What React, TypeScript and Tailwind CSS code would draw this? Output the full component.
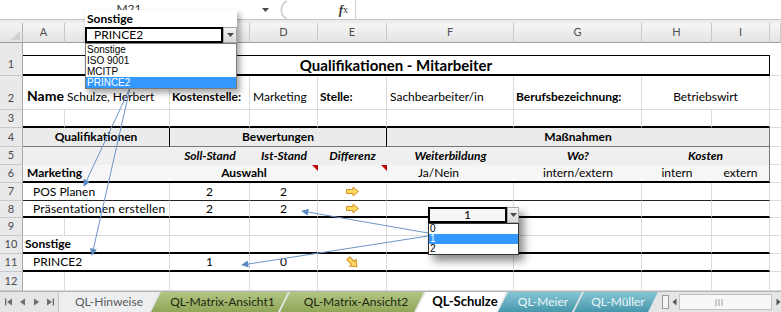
import React from "react";

const GR = "border-r border-r-[#dadada]";
const GB = "border-b border-b-[#dadada]";
const TB = "border-b-2 border-b-black";
const KB = "border-b border-b-[#222222]";
const T = "flex overflow-hidden whitespace-nowrap text-[12px] text-black";

function RH({ n, tall }: { n: number; tall?: boolean }) {
  return (
    <div
      className={`bg-[#e8e9eb] border-r border-r-[#a9a9a9] border-b border-b-[#c9c9c9] flex justify-center text-[11px] text-[#4a4a4a] ${
        tall ? "items-end pb-[3px]" : "items-center"
      }`}
    >
      {n}
    </div>
  );
}

const RightArrow = () => (
  <svg width="15" height="11" viewBox="0 0 15 11">
    <path d="M1.5 3.5H8V1L13.5 5.5L8 10V7.5H1.5Z" fill="#ffd966" stroke="#d58f1e" strokeWidth="1" />
  </svg>
);

const DiagArrow = () => (
  <svg width="15" height="15" viewBox="0 0 15 15">
    <g transform="rotate(45 7.5 7.5)">
      <path d="M1.5 5.5H8V3L13.5 7.5L8 12V9.5H1.5Z" fill="#ffd966" stroke="#d58f1e" strokeWidth="1" />
    </g>
  </svg>
);

const Chev = () => (
  <svg width="7" height="4" viewBox="0 0 7 4">
    <path d="M0 0H7L3.5 4Z" fill="#4a4a4a" />
  </svg>
);

const RedTri = () => (
  <div className="absolute top-0 right-0 w-0 h-0 border-l-[6px] border-l-transparent border-t-[6px] border-t-[#c00000]" />
);

export default function App() {
  const cols = ["A", "", "", "D", "E", "F", "G", "H", "I", ""];
  return (
    <div className="relative w-[781px] h-[312px] overflow-hidden bg-white font-['Lato',sans-serif]">
      {/* Formula bar */}
      <div className="h-[20px] flex bg-white border-b border-b-[#c4c4c4]">
        <div className="w-[258px] h-[10px] overflow-hidden flex justify-center">
          <span className="block h-[10px] overflow-hidden text-[12px] leading-[17px] text-[#333]">M21</span>
        </div>
        <div className="w-[14px] flex items-center justify-center">
          <Chev />
        </div>
        <div className="w-[28px] flex items-center pl-[3px]">
          <svg width="14" height="20" viewBox="0 0 14 20">
            <path d="M12 1 A10 10 0 0 0 12 19" fill="none" stroke="#c9c9c9" strokeWidth="1.5" />
          </svg>
        </div>
        <div className="w-[55px] flex items-center justify-end pr-[7px] font-['Liberation_Serif',serif] italic font-bold text-[13px] text-[#333]">
          f<span className="text-[10px] not-italic font-normal">x</span>
        </div>
        <div className="flex-1 border-l border-l-[#d0d0d0] bg-white" />
      </div>
      <div className="h-[3px] bg-[#ececec]" />

      {/* Sheet grid */}
      <div className="grid grid-cols-[23px_42px_105px_80px_68px_69px_127px_128px_70px_58px_11px] grid-rows-[20px_33px_34px_18px_19px_18px_18px_18px_17px_18px_18px_18px_19px]">
        {/* Header */}
        <div className="relative bg-linear-to-b from-[#f4f4f4] to-[#e2e2e2] border-r border-r-[#b0b0b0] border-b border-b-[#9f9f9f]">
          <div className="absolute right-[2px] bottom-[2px] w-0 h-0 border-l-[9px] border-l-transparent border-b-[9px] border-b-[#cfcfcf]" />
        </div>
        {cols.map((c, i) => (
          <div
            key={i}
            className="bg-linear-to-b from-[#f6f6f6] to-[#e3e3e3] border-r border-r-[#c9c9c9] border-b border-b-[#9f9f9f] flex items-center justify-center text-[11px] text-[#505050]"
          >
            {c}
          </div>
        ))}

        {/* Row 1 */}
        <RH n={1} tall />
        <div className="col-span-9 flex flex-col justify-end">
          <div className="h-[21px] border-t border-t-black border-r border-r-black border-b-2 border-b-black flex items-center justify-center text-[15px] font-bold text-black">
            Qualifikationen - Mitarbeiter
          </div>
        </div>
        <div className={GB} />

        {/* Row 2 */}
        <RH n={2} tall />
        <div className={`${T} items-end pb-[3px] pl-[4px] ${GB} text-[14px] font-bold`}>Name</div>
        <div className={`${T} items-end pb-[3px] pl-[2px] ${GR} ${GB}`}>Schulze, Herbert</div>
        <div className={`${T} items-end pb-[3px] pl-[2px] ${GR} ${GB} font-bold`}>Kostenstelle:</div>
        <div className={`${T} items-end pb-[3px] pl-[3px] ${GR} ${GB}`}>Marketing</div>
        <div className={`${T} items-end pb-[3px] pl-[2px] ${GR} ${GB} font-bold`}>Stelle:</div>
        <div className={`${T} items-end pb-[3px] pl-[3px] ${GR} ${GB}`}>Sachbearbeiter/in</div>
        <div className={`${T} items-end pb-[3px] pl-[2px] ${GR} ${GB} font-bold`}>Berufsbezeichnung:</div>
        <div className={`${T} col-span-2 items-end justify-center pb-[3px] ${GR} ${GB}`}>Betriebswirt</div>
        <div className={GB} />

        {/* Row 3 */}
        <RH n={3} />
        <div className={`${GR} ${TB}`} />
        <div className={`${GR} ${TB}`} />
        <div className={`${GR} ${TB}`} />
        <div className={`${GR} ${TB}`} />
        <div className={`${GR} ${TB}`} />
        <div className={`${GR} ${TB}`} />
        <div className={`${GR} ${TB}`} />
        <div className={`${GR} ${TB}`} />
        <div className={`${GR} ${TB}`} />
        <div className={GB} />

        {/* Row 4 */}
        <RH n={4} />
        <div className={`${T} col-span-2 items-center justify-center bg-[#ebebeb] border-r border-r-black border-b border-b-[#777] font-bold`}>
          Qualifikationen
        </div>
        <div className={`${T} col-span-3 items-center justify-center bg-[#ebebeb] border-r border-r-black border-b border-b-[#777] font-bold`}>
          Bewertungen
        </div>
        <div className={`${T} col-span-4 items-center justify-center bg-[#ebebeb] border-r border-r-[#777] border-b border-b-[#777] font-bold`}>
          Maßnahmen
        </div>
        <div className={GB} />

        {/* Row 5 */}
        <RH n={5} />
        <div className="col-span-2 bg-[#efefef]" />
        <div className={`${T} items-center justify-center bg-[#efefef] font-bold italic`}>Soll-Stand</div>
        <div className={`${T} items-center justify-center bg-[#efefef] font-bold italic`}>Ist-Stand</div>
        <div className={`${T} items-center justify-center bg-[#efefef] font-bold italic`}>Differenz</div>
        <div className={`${T} items-center justify-center bg-[#efefef] font-bold italic`}>Weiterbildung</div>
        <div className={`${T} items-center justify-center bg-[#efefef] font-bold italic`}>Wo?</div>
        <div className={`${T} col-span-2 items-center justify-center bg-[#efefef] border-r border-r-[#777] font-bold italic`}>Kosten</div>
        <div className={GB} />

        {/* Row 6 */}
        <RH n={6} />
        <div className={`${T} col-span-2 items-center pl-[4px] bg-[#f6f6f6] ${TB} font-bold`}>Marketing</div>
        <div className={`${T} relative col-span-2 items-center justify-center bg-[#f6f6f6] ${TB} font-bold`}>
          Auswahl
          <RedTri />
        </div>
        <div className={`relative bg-[#f6f6f6] ${TB}`}>
          <RedTri />
        </div>
        <div className={`${T} items-center justify-center pr-[24px] bg-[#f6f6f6] ${TB}`}>Ja/Nein</div>
        <div className={`${T} items-center justify-center bg-[#f6f6f6] ${TB}`}>intern/extern</div>
        <div className={`${T} items-center justify-center bg-[#f6f6f6] ${TB}`}>intern</div>
        <div className={`${T} items-center justify-center bg-[#f6f6f6] border-r border-r-[#777] ${TB}`}>extern</div>
        <div className={GB} />

        {/* Row 7 */}
        <RH n={7} />
        <div className={`${T} col-span-2 items-center pl-[10px] ${GR} ${KB}`}>POS Planen</div>
        <div className={`${T} items-center justify-center ${GR} ${KB}`}>2</div>
        <div className={`${T} items-center justify-center ${GR} ${KB}`}>2</div>
        <div className={`${T} items-center justify-center ${GR} ${KB}`}>
          <RightArrow />
        </div>
        <div className={`${GR} ${KB}`} />
        <div className={`${GR} ${KB}`} />
        <div className={`${GR} ${KB}`} />
        <div className={`${GR} ${KB}`} />
        <div className={GB} />

        {/* Row 8 */}
        <RH n={8} />
        <div className={`${T} col-span-2 items-center pl-[10px] ${GR} ${TB} tracking-[0.2px]`}>Präsentationen erstellen</div>
        <div className={`${T} items-center justify-center ${GR} ${TB}`}>2</div>
        <div className={`${T} items-center justify-center ${GR} ${TB}`}>2</div>
        <div className={`${T} items-center justify-center ${GR} ${TB}`}>
          <RightArrow />
        </div>
        <div className={`${GR} ${TB}`} />
        <div className={`${GR} ${TB}`} />
        <div className={`${GR} ${TB}`} />
        <div className={`${GR} ${TB}`} />
        <div className={GB} />

        {/* Row 9 */}
        <RH n={9} />
        <div className={`${GR} ${GB}`} />
        <div className={`${GR} ${GB}`} />
        <div className={`${GR} ${GB}`} />
        <div className={`${GR} ${GB}`} />
        <div className={`${GR} ${GB}`} />
        <div className={`${GR} ${GB}`} />
        <div className={`${GR} ${GB}`} />
        <div className={`${GR} ${GB}`} />
        <div className={`${GR} ${GB}`} />
        <div className={GB} />

        {/* Row 10 */}
        <RH n={10} />
        <div className={`${T} col-span-2 items-center pl-[2px] ${GR} ${TB} font-bold`}>Sonstige</div>
        <div className={`${GR} ${TB}`} />
        <div className={`${GR} ${TB}`} />
        <div className={`${GR} ${TB}`} />
        <div className={`${GR} ${TB}`} />
        <div className={`${GR} ${TB}`} />
        <div className={`${GR} ${TB}`} />
        <div className={`${GR} ${TB}`} />
        <div className={GB} />

        {/* Row 11 */}
        <RH n={11} />
        <div className={`${T} col-span-2 items-center pl-[10px] ${GR} ${TB}`}>PRINCE2</div>
        <div className={`${T} items-center justify-center ${GR} ${TB}`}>1</div>
        <div className={`${T} items-center justify-center ${GR} ${TB}`}>0</div>
        <div className={`${T} items-center justify-center ${GR} ${TB}`}>
          <DiagArrow />
        </div>
        <div className={`${GR} ${TB}`} />
        <div className={`${GR} ${TB}`} />
        <div className={`${GR} ${TB}`} />
        <div className={`${GR} ${TB}`} />
        <div className={GB} />

        {/* Row 12 */}
        <RH n={12} />
        <div className={`${GR} ${GB}`} />
        <div className={`${GR} ${GB}`} />
        <div className={`${GR} ${GB}`} />
        <div className={`${GR} ${GB}`} />
        <div className={`${GR} ${GB}`} />
        <div className={`${GR} ${GB}`} />
        <div className={`${GR} ${GB}`} />
        <div className={`${GR} ${GB}`} />
        <div className={`${GR} ${GB}`} />
        <div className={GB} />
      </div>

      {/* Sheet tabs bar */}
      <div className="flex h-[21px] bg-[#e4e5e7] border-t border-t-[#b4b4b4] text-[12px]">
        <div className="w-[58px] flex items-center justify-around px-[1px]">
          <svg width="8" height="8" viewBox="0 0 8 8">
            <rect x="0" y="0.5" width="1.3" height="7" fill="#6b6b6b" />
            <path d="M7 0.5V7.5L2 4Z" fill="#6b6b6b" />
          </svg>
          <svg width="6" height="8" viewBox="0 0 6 8">
            <path d="M5 0.5V7.5L0 4Z" fill="#6b6b6b" />
          </svg>
          <svg width="6" height="8" viewBox="0 0 6 8">
            <path d="M1 0.5V7.5L6 4Z" fill="#6b6b6b" />
          </svg>
          <svg width="8" height="8" viewBox="0 0 8 8">
            <path d="M1 0.5V7.5L6 4Z" fill="#6b6b6b" />
            <rect x="6.7" y="0.5" width="1.3" height="7" fill="#6b6b6b" />
          </svg>
        </div>
        <div className="w-[1px] bg-[#c4c4c4]" />
        <div className="w-[100px] flex items-center justify-center text-[#5a5a5a] bg-[#eceef0] [clip-path:polygon(0_100%,0_0,100%_0,calc(100%-10px)_100%)]">
          QL-Hinweise
        </div>
        <div className="-ml-[8px] w-[137px] flex items-center justify-center pl-[6px] text-[#1c2610] bg-linear-to-b from-[#b2c583] to-[#8fa657] [clip-path:polygon(0_100%,10px_0,100%_0,calc(100%-10px)_100%)]">
          QL-Matrix-Ansicht1
        </div>
        <div className="-ml-[8px] w-[144px] flex items-center justify-center pl-[8px] text-[#1c2610] bg-linear-to-b from-[#b2c583] to-[#8fa657] [clip-path:polygon(0_100%,10px_0,100%_0,calc(100%-10px)_100%)]">
          QL-Matrix-Ansicht2
        </div>
        <div className="-ml-[8px] w-[90px] flex items-center justify-center pl-[8px] text-black font-bold text-[13px] bg-white [clip-path:polygon(0_100%,10px_0,100%_0,calc(100%-10px)_100%)]">
          QL-Schulze
        </div>
        <div className="-ml-[8px] w-[84px] flex items-center justify-center pl-[6px] text-[#eaf6fa] bg-linear-to-b from-[#86c6d5] to-[#4697ab] [clip-path:polygon(0_100%,10px_0,100%_0,calc(100%-10px)_100%)]">
          QL-Meier
        </div>
        <div className="-ml-[8px] w-[84px] flex items-center justify-center pl-[4px] text-[#eaf6fa] bg-linear-to-b from-[#86c6d5] to-[#4697ab] [clip-path:polygon(0_100%,10px_0,100%_0,calc(100%-10px)_100%)]">
          QL-Müller
        </div>
        <div className="w-[4px]" />
        <div className="w-[7px] my-[3px] border border-[#9a9a9a] bg-[#f4f4f4]" />
        <div className="w-[10px] flex items-center justify-center">
          <svg width="5" height="8" viewBox="0 0 5 8">
            <path d="M4.5 0.5V7.5L0.5 4Z" fill="#555" />
          </svg>
        </div>
        <div className="flex-1 my-[2px] border border-[#c3c3c3] bg-[#f7f7f7] flex items-center justify-center pr-[14px]">
          <svg width="8" height="7" viewBox="0 0 8 7">
            <rect x="0.5" y="0" width="1" height="7" fill="#a0a0a0" />
            <rect x="3.5" y="0" width="1" height="7" fill="#a0a0a0" />
            <rect x="6.5" y="0" width="1" height="7" fill="#a0a0a0" />
          </svg>
        </div>
        <div className="w-[9px] flex items-center justify-end">
          <svg width="5" height="8" viewBox="0 0 5 8">
            <path d="M0.5 0.5V7.5L4.5 4Z" fill="#555" />
          </svg>
        </div>
      </div>

      {/* Blue annotation arrows */}
      <svg className="absolute left-0 top-0 pointer-events-none" width="781" height="312">
        <defs>
          <marker id="ah" viewBox="0 0 10 10" refX="9" refY="5" markerWidth="9" markerHeight="7" orient="auto" markerUnits="userSpaceOnUse">
            <path d="M0 0L10 5L0 10Z" fill="#5a89c2" />
          </marker>
        </defs>
        <line x1="130" y1="88" x2="84" y2="186" stroke="#6c96c6" strokeWidth="1" markerEnd="url(#ah)" />
        <line x1="130" y1="88" x2="92" y2="255" stroke="#6c96c6" strokeWidth="1" markerEnd="url(#ah)" />
        <line x1="428" y1="233" x2="302" y2="211" stroke="#6c96c6" strokeWidth="1" markerEnd="url(#ah)" />
        <line x1="428" y1="236" x2="242" y2="265" stroke="#6c96c6" strokeWidth="1" markerEnd="url(#ah)" />
      </svg>

      {/* Dropdown 1 (data validation list) */}
      <div className="absolute left-[85px] top-[10px] w-[152px] shadow-[3px_4px_6px_rgba(0,0,0,0.35)]">
        <div className="h-[17px] bg-white flex items-center pl-[2px] font-bold text-[12px] text-black">Sonstige</div>
        <div className="h-[16px] flex bg-white">
          <div className="flex-1 border-2 border-black flex items-center pl-[7px] text-[12px] text-black">PRINCE2</div>
          <div className="w-[14px] bg-linear-to-b from-[#f4f4f4] to-[#d8d8d8] border border-[#a8a8a8] flex items-center justify-center">
            <Chev />
          </div>
        </div>
        <div className="border border-[#7a7a7a] bg-white text-[10px] leading-[11px] text-black font-['Liberation_Sans',sans-serif]">
          <div className="h-[11px] pl-[1px]">Sonstige</div>
          <div className="h-[11px] pl-[1px]">ISO 9001</div>
          <div className="h-[11px] pl-[1px]">MCITP</div>
          <div className="h-[11px] pl-[1px] bg-[#3399ff] text-white">PRINCE2</div>
        </div>
      </div>

      {/* Dropdown 2 */}
      <div className="absolute left-[428px] top-[207px] w-[91px] shadow-[5px_6px_8px_rgba(0,0,0,0.45)]">
        <div className="h-[16px] flex">
          <div className="flex-1 border-2 border-black bg-[#f7f7f7] flex items-center justify-center text-[12px] text-black">1</div>
          <div className="w-[12px] bg-linear-to-b from-[#f4f4f4] to-[#d8d8d8] border border-[#a8a8a8] flex items-center justify-center">
            <Chev />
          </div>
        </div>
        <div className="border border-[#333] bg-white text-[10px] leading-[10px] text-black font-['Liberation_Sans',sans-serif]">
          <div className="h-[10px] pl-[1px]">0</div>
          <div className="h-[10px] pl-[1px] bg-[#3399ff] text-white">1</div>
          <div className="h-[10px] pl-[1px]">2</div>
        </div>
      </div>
    </div>
  );
}
